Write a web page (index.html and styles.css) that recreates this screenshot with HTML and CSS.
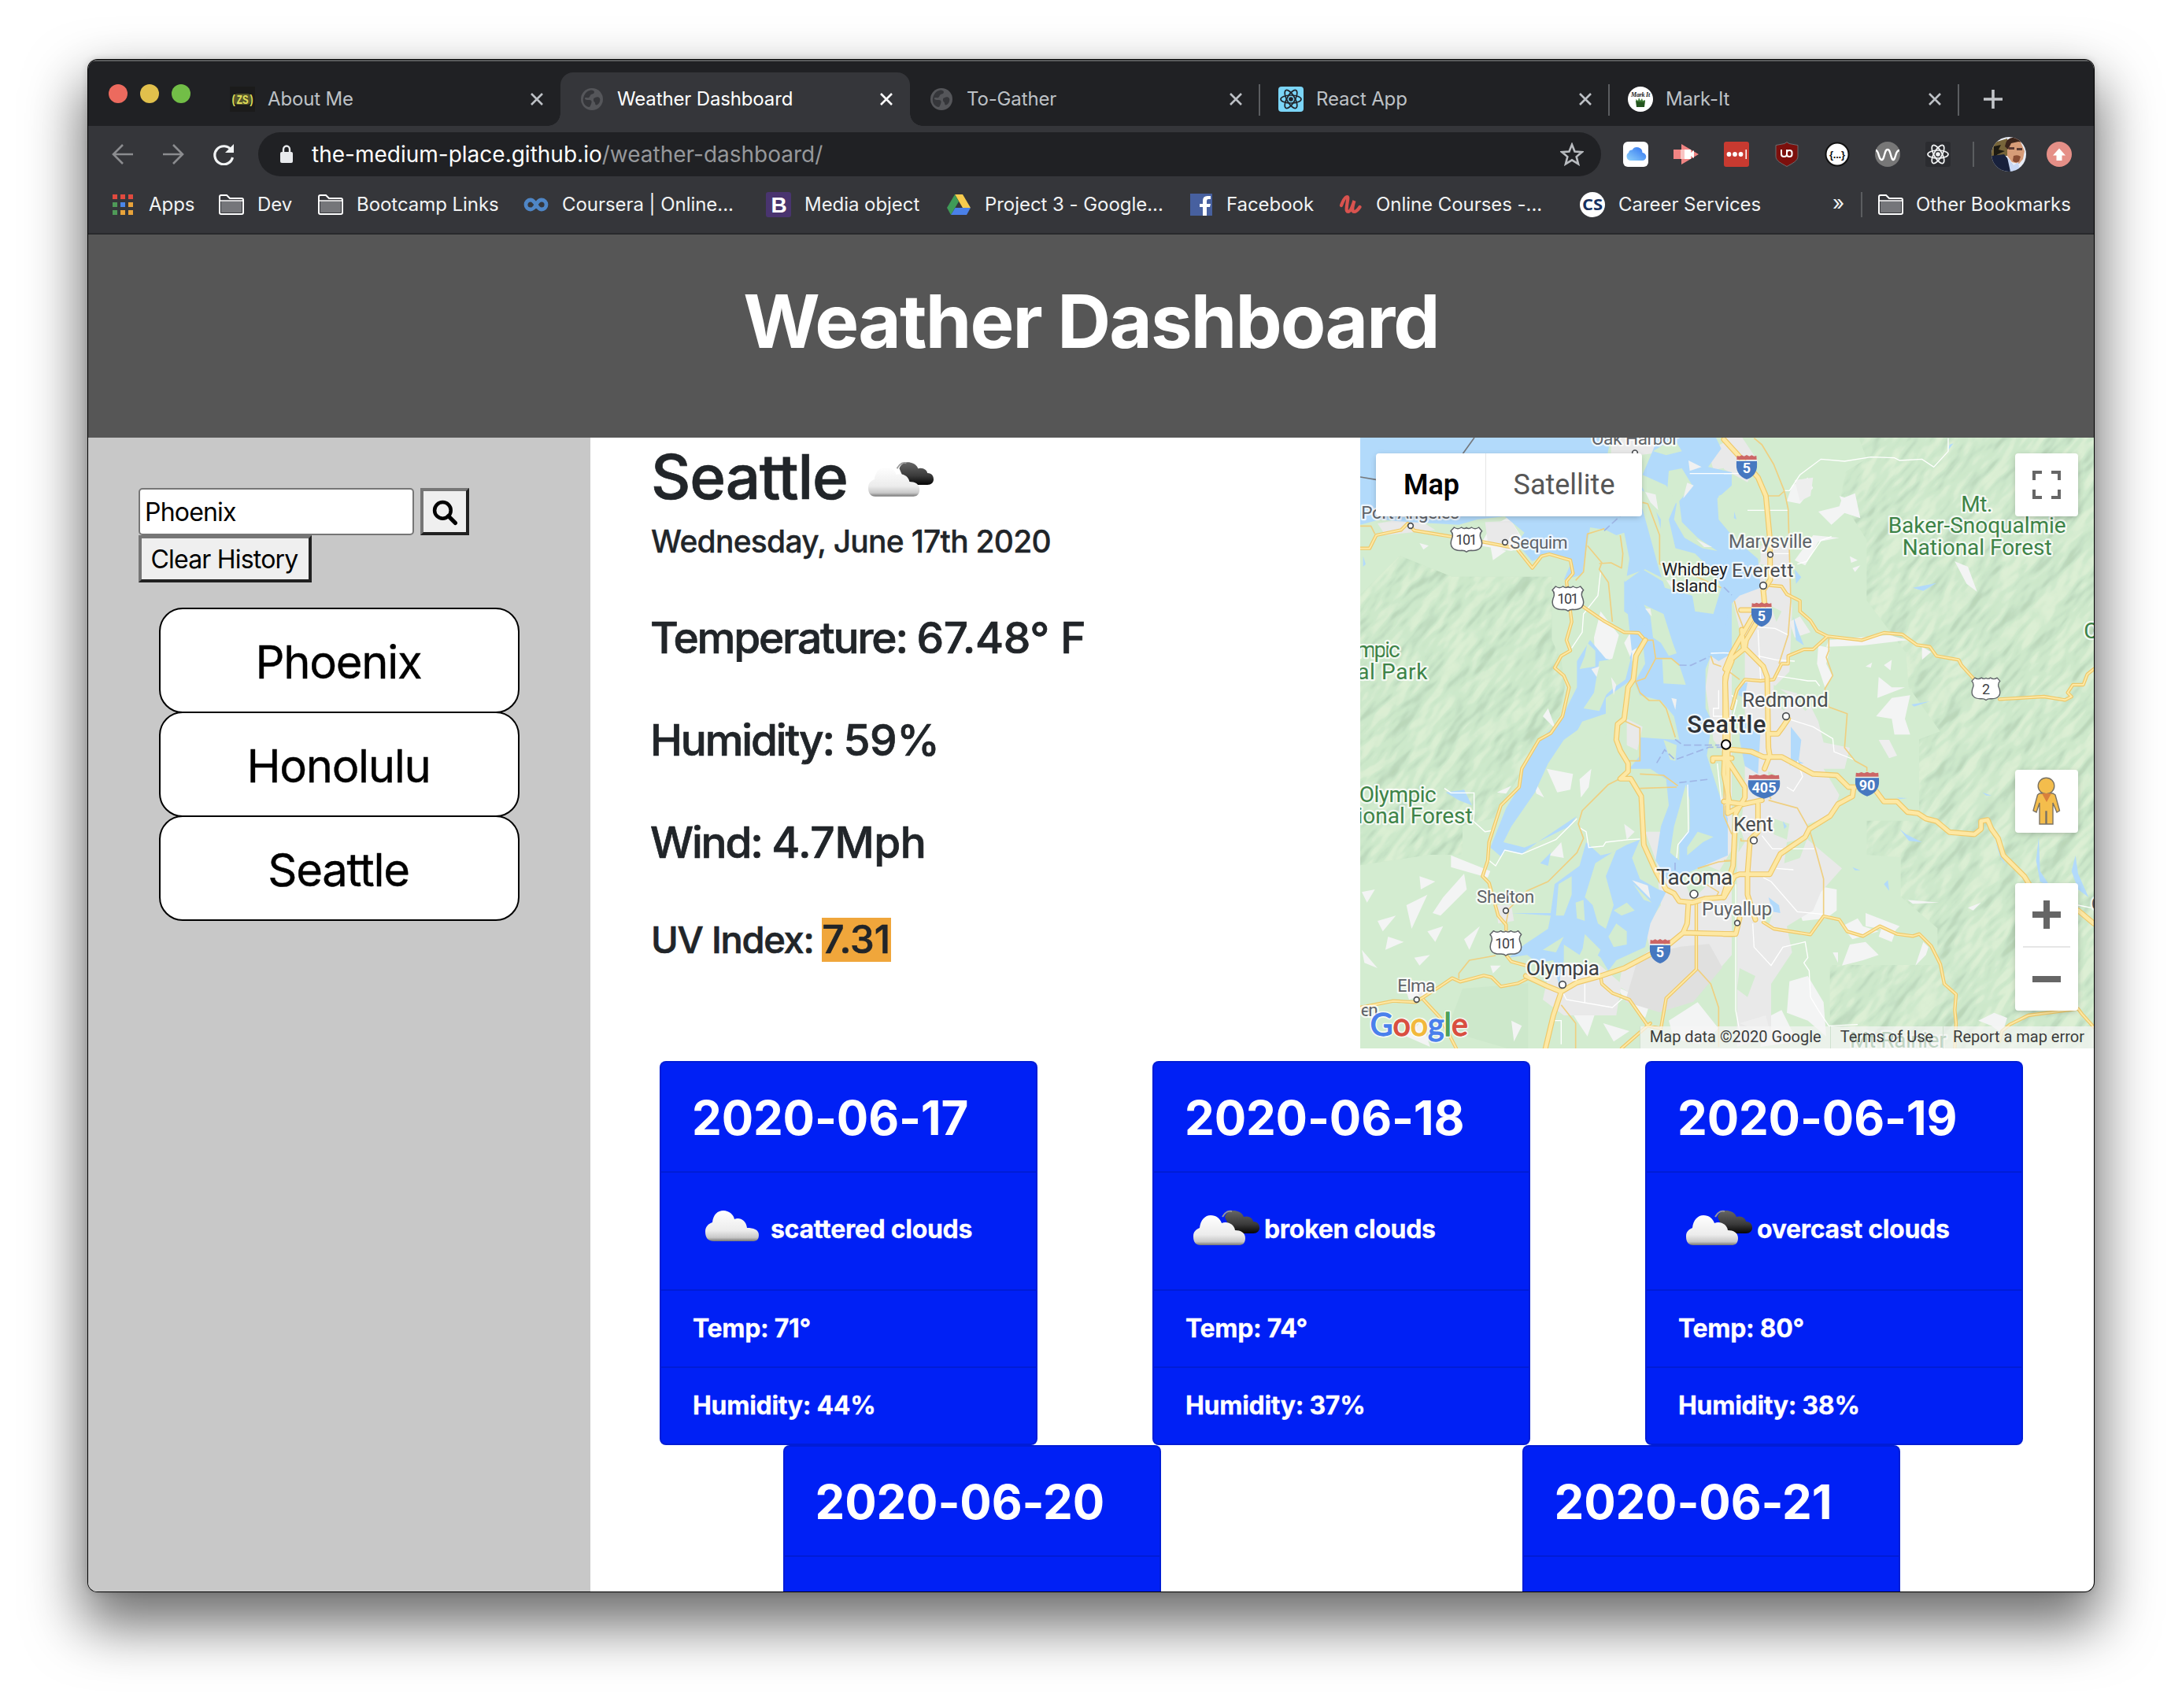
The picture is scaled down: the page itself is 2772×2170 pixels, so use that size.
FILE: index.html
```html
<!DOCTYPE html>
<html lang="en">
<head>
<meta charset="utf-8">
<title>Weather Dashboard</title>
<link rel="stylesheet" href="styles.css">
</head>
<body>
<svg class="defs" width="0" height="0" aria-hidden="true">
  <defs>
    <symbol id="close" viewBox="0 0 20 20"><path d="M3 3l14 14M17 3L3 17" stroke="currentColor" stroke-width="2.6" fill="none"/></symbol>
    <symbol id="globe" viewBox="0 0 28 28"><circle cx="14" cy="14" r="14" fill="#55565a"/><path d="M11 3c3-1 6 0 6 2s-2 2-4 3-1 3-3 4-5-1-5 1 3 2 6 2 3 3 2 5-1 4-3 4C5 23 2 18 3 13 4 8 7 4 11 3zM18 12c2-1 5-1 6 1s0 6-3 8c-2 1-3 0-3-2s-2-1-2-4 1-2 2-3z" fill="#35363a"/></symbol>
    <symbol id="atom" viewBox="-14 -14 28 28"><g fill="none" stroke="currentColor" stroke-width="1.7"><ellipse rx="13" ry="5"/><ellipse rx="13" ry="5" transform="rotate(60)"/><ellipse rx="13" ry="5" transform="rotate(120)"/></g><circle r="2.8" fill="currentColor"/></symbol>
    <symbol id="folder" viewBox="0 0 32 26"><path d="M1 24V3q0-2 2-2h7l4 4h15q2 0 2 2v16q0 2-2 2H3q-2 0-2-2z" fill="#35363a" stroke="#fff" stroke-width="2"/><path d="M3 9H29V23H3z" fill="#75767a"/><path d="M1 8h30" stroke="#fff" stroke-width="1.600"/></symbol>
    <linearGradient id="cloudfill" x1="0" y1="0" x2="0" y2="1"><stop offset="0" stop-color="#fff"/><stop offset=".65" stop-color="#ececec"/><stop offset=".88" stop-color="#c8c8c8"/><stop offset="1" stop-color="#777"/></linearGradient>
    <linearGradient id="darkfill" x1="0" y1="0" x2="0" y2="1"><stop offset="0" stop-color="#666"/><stop offset=".6" stop-color="#3a3a3a"/><stop offset="1" stop-color="#050505"/></linearGradient>
    <symbol id="cloud" viewBox="0 0 70 42"><path d="M12 40C4 40 1 35 1 28S5 18 10 16C11 6 17 1 24 1s13 5 14 11c6-3 15 1 16 11 8 0 15 2 15 9s-4 8-8 8z" fill="url(#cloudfill)"/></symbol>
    <symbol id="clouds" viewBox="0 0 86 46"><path d="M41 9C43 3 48 1 52 1s11 2 13 8c6-2 12 2 12 6 6 0 8 4 8 8s-3 7-8 7H50z" fill="url(#darkfill)"/><path d="M38 9C42 2 47 1 50 2" stroke="#999" stroke-width="2" fill="none"/><path d="M10 45C4 45 1 41 1 34s4-9 8-11C10 13 16 7 23 7s12 4 14 10c8-3 16 2 17 9 7 0 13 3 13 10s-4 9-8 9z" fill="url(#cloudfill)"/></symbol>
    <symbol id="interstate" viewBox="-40 -48 80 96"><path d="M-37-43l9 2 9-4 9 4 10-5 10 5 9-4 9 4 9-2 1 15h-76z" fill="#c66"/><path d="M-38-26h76v4h-76z" fill="#fff"/><path d="M-39-23h78C44 18 25 38 0 47-25 38-44 18-39-23z" fill="#4678c0"/></symbol>
    <symbol id="usroute" viewBox="-63 -51 126 102"><path d="M-47-46q14 10 28 0 10 8 19 1 9 7 19-1 14 10 28 0l12 14q-10 9-6 24C70 30 48 44 18 42q-12 0-18 6-6-6-18-6C-48 44-70 30-54-8q4-15-6-24z" fill="#fff" stroke="#5f6368" stroke-width="4.500" stroke-linejoin="round"/></symbol>
  </defs>
</svg>

<main class="window">
  <header class="tabs">
    <div class="lights"><i class="red"></i><i class="yellow"></i><i class="green"></i></div>
    <div class="tab">
      <svg class="fav" viewBox="0 0 32 32"><rect width="32" height="32" fill="#1b1b1b"/><rect x="5" y="9" width="22" height="14" rx="5" fill="#55552c"/><text x="1" y="22" font-family="Liberation Mono" font-size="17" font-weight="700" fill="#dddb57" textLength="30" lengthAdjust="spacingAndGlyphs">(ZS)</text></svg>
      <span>About Me</span><svg class="x"><use href="#close"/></svg>
    </div>
    <div class="tab active">
      <svg class="fav globe"><use href="#globe"/></svg><span>Weather Dashboard</span><svg class="x"><use href="#close"/></svg>
    </div>
    <div class="tab sep">
      <svg class="fav globe"><use href="#globe"/></svg><span>To-Gather</span><svg class="x"><use href="#close"/></svg>
    </div>
    <div class="tab sep">
      <svg class="fav" viewBox="-16 -16 32 32"><rect x="-16" y="-16" width="32" height="32" rx="4" fill="#7bd5f7"/><g color="#20232a"><use href="#atom" x="-14" y="-14" width="28" height="28"/></g></svg><span>React App</span><svg class="x"><use href="#close"/></svg>
    </div>
    <div class="tab sep">
      <svg class="fav" viewBox="0 0 32 32"><circle cx="16" cy="16" r="16" fill="#fff"/><text x="4" y="13" font-family="Liberation Serif" font-style="italic" font-weight="700" font-size="8" textLength="24" fill="#222">Mark It</text><path d="M10 18h12l-1 8H11z" fill="#25551f"/><path d="M11 19l-1-3 3 2 1-4 2 4 2-3 1 3 3-1-1 3z" fill="#3c7a34"/></svg><span>Mark-It</span><svg class="x"><use href="#close"/></svg>
    </div>
    <svg class="plus" viewBox="0 0 24 24"><path d="M12 0v24M0 12h24" stroke="#c3c6ca" stroke-width="3.600"/></svg>
  </header>

  <nav class="toolbar">
    <svg class="nav dim" viewBox="0 0 28 28"><path d="M27 14H3M14 2L2 14l12 12" fill="none" stroke="#8b8c8f" stroke-width="2.600"/></svg>
    <svg class="nav dim" viewBox="0 0 28 28"><path d="M1 14h24M14 2l12 12-12 12" fill="none" stroke="#8b8c8f" stroke-width="2.600"/></svg>
    <svg class="nav" viewBox="0 0 28 28"><path d="M24 9A11.500 11.500 0 1 0 25.500 18" fill="none" stroke="#f1f3f4" stroke-width="3.200"/><path d="M27 1v11H16z" fill="#f1f3f4"/></svg>
    <div class="omnibox">
      <svg class="lock" viewBox="0 0 18 24"><rect x="1" y="9" width="16" height="14" rx="2" fill="#e8eaed"/><path d="M5 10V6a4 4.500 0 0 1 8 0v4" fill="none" stroke="#e8eaed" stroke-width="2.400"/></svg>
      <span class="url">the-medium-place.github.io<em>/weather-dashboard/</em></span>
      <svg class="star" viewBox="0 0 28 28"><path d="M14 2.500l3.300 8.200 8.700.6-6.700 5.600 2.200 8.600L14 20.800l-7.500 4.700 2.200-8.600L2 11.300l8.700-.6z" fill="none" stroke="#b9bcc0" stroke-width="2.400"/></svg>
    </div>
    <div class="exts">
      <svg viewBox="0 0 32 32"><linearGradient id="icl" x1="0" y1="1" x2="1" y2="0"><stop offset="0" stop-color="#8fd3fb"/><stop offset="1" stop-color="#2d6ff0"/></linearGradient><rect width="32" height="32" rx="6" fill="#fff"/><path d="M9 24a5.500 5.500 0 0 1-2-10 4 4 0 0 1 4.500-3.500 7 7 0 0 1 13 3.500 5 5 0 0 1-.5 10z" fill="url(#icl)"/></svg>
      <svg viewBox="0 0 32 32"><path d="M0 10h10V3l22 13-22 13v-7H0z" fill="#f08483"/><rect x="9" y="10" width="13" height="12" fill="#f9c3c2"/><path d="M14 10h8v4l4-3v10l-4-3v4h-8z" fill="#fff"/></svg>
      <svg viewBox="0 0 32 32"><rect width="32" height="32" rx="3" fill="#c83a30"/><g fill="#fff"><circle cx="6.500" cy="16" r="2.900"/><circle cx="14" cy="16" r="2.900"/><circle cx="21.500" cy="16" r="2.900"/><path d="M27.500 10h1.500v12h-1.500z"/></g></svg>
      <svg viewBox="0 0 32 32"><path d="M16 .5l3 2 11 2v14c0 6-7 9-14 13C9 27.500 2 24.500 2 18.500v-14l11-2z" fill="#7c100d" stroke="#6b6c6f" stroke-width="1"/><path d="M9 10v6q0 3 3.500 3t3.500-3v-6" fill="none" stroke="#fff" stroke-width="2"/><rect x="16" y="11" width="6.500" height="8" rx="3" fill="none" stroke="#fff" stroke-width="2"/></svg>
      <svg viewBox="0 0 32 32"><circle cx="16" cy="16" r="14.500" fill="#fff" stroke="#111" stroke-width="2"/><text x="16" y="20.500" text-anchor="middle" font-family="Liberation Sans" font-weight="700" font-size="13" textLength="20" fill="#111">{...}</text></svg>
      <svg viewBox="0 0 32 32"><circle cx="16" cy="16" r="16" fill="#777"/><path d="M1 11c2 0 3 3 4 7s4 8 6 2 2-10 5-10 3 4 5 10 4 2 5-2 3-7 5-7" fill="none" stroke="#fff" stroke-width="2.400"/></svg>
      <svg viewBox="-16 -16 32 32"><rect x="-16" y="-16" width="32" height="32" rx="3" fill="#2b2c30"/><g color="#f1f3f4" transform="rotate(0)"><use href="#atom" x="-14" y="-14" width="28" height="28"/></g></svg>
    </div>
    <svg class="avatar" viewBox="0 0 44 44"><clipPath id="av"><circle cx="22" cy="22" r="22"/></clipPath><g clip-path="url(#av)"><rect width="44" height="44" fill="#e9edf6"/><path d="M0 8l20-6v22H0z" fill="#77653a"/><path d="M3 12l9-2-3 6 8 2-9 4-5 4z" fill="#1d1a12"/><path d="M20 4q8-6 16 0l6 14-2 10-5 6-9-2-6-8z" fill="#d79c78"/><path d="M17 12Q19-1 31 1l10 6-7-1-9 2-4 8z" fill="#3a241b"/><path d="M21 13h8v3h-7zM32 14h7v3h-7zM28 14h5" fill="#5a3a33"/><path d="M28 24q6-2 9 1l-2 6q-5 3-8-1z" fill="#8a4d34"/><path d="M0 24l16-2 10 12 6 10H0z" fill="#18213c"/><path d="M20 26l8 10 6-4 2 12H24z" fill="#c9d8f4"/></g></svg>
    <svg class="update" viewBox="0 0 32 32"><circle cx="16" cy="16" r="16" fill="#e58f87"/><path d="M16 8.500l8 9h-4.500V24h-7v-6.500H8z" fill="#fff"/></svg>
  </nav>

  <nav class="bookmarks">
    <div class="bm b1"><svg viewBox="0 0 32 32"><g fill="#e04a3f"><path d="M3 3h6v6H3zM13 3h6v6h-6zM23 3h6v6h-6z"/></g><path d="M3 13h6v6H3zM3 23h6v6H3z" fill="#4f9a58"/><path d="M13 13h6v6h-6z" fill="#4a86e8"/><path d="M23 13h6v6h-6zM13 23h6v6h-6zM23 23h6v6h-6z" fill="#e8a33a"/></svg>Apps</div>
    <div class="bm b2"><svg class="f"><use href="#folder"/></svg>Dev</div>
    <div class="bm b3"><svg class="f"><use href="#folder"/></svg>Bootcamp Links</div>
    <div class="bm b4"><svg viewBox="0 0 32 32"><path d="M16 16c-3-5-4.500-6-7-6a6 6 0 0 0 0 12c2.500 0 4.500-1 7-6s4.500-6 7-6a6 6 0 0 1 0 12c-2.500 0-4-1-7-6z" fill="none" stroke="#4f86c6" stroke-width="4.800"/></svg>Coursera | Online...</div>
    <div class="bm b5"><svg viewBox="0 0 32 32"><rect width="32" height="32" rx="3" fill="#49346f"/><text x="16.500" y="26" text-anchor="middle" font-family="Liberation Sans" font-weight="700" font-size="28" fill="#fff">B</text></svg>Media object</div>
    <div class="bm b6"><svg viewBox="0 0 32 32"><path d="M11 3h10l10 17H21z" fill="#f7cb4d"/><path d="M11 3l5 9L6 29l-5-9z" fill="#3f9b57"/><path d="M11.500 20H31l-5 9H6z" fill="#4a80e8"/></svg>Project 3 - Google...</div>
    <div class="bm b7"><svg viewBox="0 0 32 32"><rect x="3" y="2" width="28" height="28" fill="#47609f"/><path d="M19 30V19h-4v-4h4v-4q0-6 6-6h4v4h-3q-2 0-2 3v3h5l-1 4h-4v11z" fill="#fff"/></svg>Facebook</div>
    <div class="bm b8"><svg viewBox="0 0 32 32"><path d="M5 17q4-11 7.500-11c3 0-4 19 1 19 4 0 6-9 8-14-3 9-3 14 0 14q3 0 7-6" fill="none" stroke="#d9534f" stroke-width="4.200" stroke-linecap="round"/></svg>Online Courses -...</div>
    <div class="bm b9"><svg viewBox="0 0 32 32"><circle cx="16" cy="16" r="16" fill="#fff"/><text x="16" y="22.500" text-anchor="middle" font-family="Open Sans" font-weight="700" font-size="19" textLength="26" lengthAdjust="spacingAndGlyphs" fill="#16305f">CS</text></svg>Career Services</div>
    <div class="more">»</div>
    <div class="bm other"><svg class="f"><use href="#folder"/></svg>Other Bookmarks</div>
  </nav>

  <section class="hero"><h1>Weather Dashboard</h1></section>

  <div class="content">
    <aside class="side">
      <div class="search"><div class="field">Phoenix</div>
        <button class="btn go"><svg viewBox="0 0 32 32"><circle cx="13" cy="13" r="10" fill="none" stroke="#000" stroke-width="4.400"/><path d="M20 20l8.500 8.500" stroke="#000" stroke-width="5" stroke-linecap="round"/></svg></button></div>
      <button class="btn clear">Clear History</button>
      <ul class="history"><li>Phoenix</li><li>Honolulu</li><li>Seattle</li></ul>
    </aside>

    <div class="main">
      <div class="current">
        <section class="today">
          <h2>Seattle <svg><use href="#clouds"/></svg></h2>
          <p class="date">Wednesday, June 17th 2020</p>
          <p class="stat">Temperature: <span>67.48° F</span></p>
          <p class="stat">Humidity: <span>59%</span></p>
          <p class="stat">Wind: <span>4.7Mph</span></p>
          <p class="uv">UV Index: <mark>7.31</mark></p>
        </section>

        <section class="map">
          <svg viewBox="0 0 2796 2328" font-family="Roboto, sans-serif">
            <defs>
              <filter id="relief" x="0" y="0" width="100%" height="100%" color-interpolation-filters="sRGB">
                <feTurbulence type="fractalNoise" baseFrequency=".0045 .0105" numOctaves="3" seed="4"/>
                <feDiffuseLighting surfaceScale="44" lighting-color="#fff"><feDistantLight azimuth="250" elevation="50"/></feDiffuseLighting>
                <feComponentTransfer><feFuncR type="table" tableValues=".71 .73 .77 .80 .81 .88"/><feFuncG type="table" tableValues=".82 .84 .88 .91 .915 .945"/><feFuncB type="table" tableValues=".70 .73 .77 .79 .80 .84"/></feComponentTransfer>
              </filter>
              <clipPath id="hills">
                <path d="M0 600L150 450 350 530 730 530V770L766 850 780 950 760 1060 680 1150 610 1280 530 1420 510 1450 390 1480V1590H260L0 1630z"/>
                <path d="M1900 0H2796V2328H2250L1790 2240V2010H2200V1870L2060 1750V1600L1930 1590V1460H2130V1150L2210 1120 2090 950 2080 820 1930 620V390L1830 230 1850 130 1930 80z"/>
              </clipPath>

              <g id="major">
                <g transform="translate(-24 -18)"><path d="M1110 790L1075 850 1065 940 1045 970 1030 1090 1005 1110 1000 1170 1015 1210 1045 1260V1290L1015 1318H1055L1095 1385 1105 1570 1150 1670 1190 1740 1220 1755 1240 1785 1290 1790 1340 1775 1410 1770 1440 1720M1440 870L1415 930V1180L1410 1300 1430 1400M1368 1250V1240H1440M1275 1790L1270 1870 1255 1905 1200 1950 1030 2040 940 2070 850 2095 790 2130 760 2220 730 2346M655 2070L740 2110 790 2130M1255 1905L1440 1910"/></g>
                <g transform="translate(1386 -18)"><path d="M0 25L50 80 130 170 160 240 175 400 177 560 150 600 155 650 120 730 85 790 80 820 150 890 165 930 170 1200 175 1230 155 1280M80 820L20 870 5 950 10 1080 15 1100 15 1320M65 675H140M68 750L75 820M110 700L30 840 5 900M15 1205L105 1215 150 1235H220L340 1300 430 1305 475 1350H500M580 1365L610 1405H660L700 1445 740 1450 770 1470 810 1480 860 1522 955 1530 980 1510V1480L1005 1475 1020 1510 1045 1545 1065 1610 1145 1690 1200 1780M1350 1820L1410 1870M10 1210L15 1250 80 1350V1390L45 1450 35 1650 0 1760M0 1405L75 1415 145 1400M130 1415V1520L100 1550 90 1680V1760L120 1855M0 1770L40 1690 60 1682H175L215 1605 310 1540 325 1510 405 1460 435 1415 490 1385 495 1350M0 1910H45L60 1850M170 1147H205L225 1120 245 1090M15 1260V1450L50 1430"/></g>
              </g>
              <g id="minor">
                <g transform="translate(-24 -18)"><path d="M24 440H60L85 390 180 370 205 345 230 372 370 395M490 415L620 440 680 515 715 470 745 462 825 485 835 535 810 565 830 720 810 790 825 830 790 850 765 895 800 925 820 970 795 1080 750 1145 705 1170 640 1280 630 1350 560 1420 515 1560 510 1630 490 1690 515 1715 550 1840 580 1875V1990L600 2015 655 2030M870 660L950 715 1030 760 1085 762 1110 790M24 2190L150 2165 235 2170 320 2115 375 2078 405 2092 495 2068 525 2075 560 2110 625 2098 680 2070M265 2160L330 2230 390 2346M940 2070L945 2100 985 2135 1050 2160 1120 2260 1170 2270 1190 2155 1305 2045V1790M1130 2250L1020 2346"/></g>
                <g transform="translate(1386 -18)"><path d="M165 580L220 585 240 615 290 640V680L330 715 355 755 395 775 525 790 610 762 680 768 735 808 785 815 810 850 895 865 905 885 955 940M1050 1015L1220 1005 1300 1018 1325 1005 1310 990 1330 960H1370L1385 920 1410 900M395 775L340 825H305L245 850 245 880H220L190 940 140 945 80 940 50 980 30 1050M150 1865L190 1890 330 1912 380 1842 440 1855 470 1900 530 1918 595 1880 660 1910 720 1918 745 1910 790 1955 825 2025 840 2100 885 2140 880 2200 885 2250 880 2346M1050 2320L1060 2280 1090 2255 1160 2220 1350 2195 1365 2215 1410 2265"/></g>
              </g>
            </defs>

            <rect width="2796" height="2328" fill="#d3ecd0"/>
            <g fill="#cde8cb"><path d="M0 600L150 450 350 530 730 530V770L766 850 780 950 760 1060 680 1150 610 1280 530 1420 390 1480V1590H260L0 1630z"/><path d="M390 2100L640 2080V2328H560L330 2260z"/></g>
            <g clip-path="url(#hills)"><rect x="-900" y="-900" width="4600" height="4200" filter="url(#relief)" transform="rotate(-48 1398 1164)" opacity=".8"/></g>

            <!-- open ground -->
            <g fill="#f3f4f4">
              <g transform="translate(-24 -18)"><path d="M250 420l35 10-20 15zM520 430l60 20-50 35zM940 680l70 90-25 90-65 20-5-100zM1030 800l30-50 30 30-30 90zM720 1080l20-30 30 80zM735 1280l100 20-10 60-50 10zM860 1320l45-40-10 70-30 40zM685 1320l40 70-30-15zM545 1370l55-25-20 30zM790 1560l10 60-55-10zM370 1610l150 60-10 25-140-40zM250 1690l60 20-55 30zM340 1770l80-90 10 60-100 100-30-10zM200 1800l80-40-60 130zM90 1860l70-20-50 60zM130 1920l60 20-70 30zM30 1970l60 70-50-20zM280 1900l60-20-30 60zM420 1930l60-50-40 90zM230 2000l60-10-40 40zM30 1750l50-10-30 50zM520 2030l40 0-30 30zM200 2130l60-20 20 30-70 20zM800 2020l60 0 10 60-60-10zM1000 2110l130 60-20 60-90-90zM820 2190l100 20-30 90-40-60zM950 2250l100 30-60 40zM1200 2240l110-70 80 100-70 60-100-20zM600 2240l40 20-30 60zM1080 720l30 10-20 25zM590 320l70 110-60 20-120-20 40-70zM200 2300l60-60 30 100z"/></g>
              <g transform="translate(1386 -18)"><path d="M360 300l80-20 10-30 50-20 20 95-60-20-50 45zM260 200l60-30 20 40-50 60-50-10zM440 240l30 10-15 25zM480 470l30 15-25 10zM490 515l30-10-20 25zM340 390l100 10-80 15-50 90-40-20zM880 490l50 20 35 95-40-30zM400 790l230-20 70 20-170 20-140 5zM360 810l45 10-15 60 25 50-30 40-30-90zM590 930l50 40 50 0-105 40zM610 885l30-20-5 40zM540 890l25-15-5 20zM755 815l35 20-35 30zM640 1010l70-10-20 90 20 60-60 0 -10-60-60-10zM320 1720l110 20 0 80-40 30-90 10-30-80zM540 1830l130 50-20 20-110-20zM450 1880l60-30 20 30 60 20-100 30zM600 1890l60-10-20 60-50-20zM480 1950l60-10 50 50-60 20-80 20zM415 1980l20 0 0 40zM250 2090l70-20 60 100 10 130-70-60-80-30zM140 2240l80-40 60 120-140 20zM970 2240l60-30 50 20-20 60-40-30zM930 1810l50-20-30 30zM700 1780l120 10-100 5zM760 1940l20 20-10 30-40 40z"/></g>
            </g>
            <!-- urban areas -->
            <g fill="#e9e9e9">
              <g transform="translate(-24 -18)"><path d="M90 345l140-25 80 50-100 10-90 10zM500 340l100-5 50 90-70 20-70-30zM980 18h220l-60 60-160 20zM1270 110l60 30-60 10zM1350 70l90-50v110l-70 10zM1370 850l70-60v800l-60 100-90 90-40-90-90-30-20-60-30-80 180 0 10-90 100-30 30-90 0-60-60-80-30-200 20-130zM1190 1580l-30 140 10 80-60 90 20 80-110 80-10 60 100 60 110 10 150-110 70-80v-300z"/><path d="M830 2030l110 0 80 70-20 120-200 0-80-60 20-90zM230 2100l80-10-60 60zM300 200l60-60zM960 900l40 30-20 60-30-40zM1040 1090l60 30-20 90-40-20zM540 1800l60 0 10 60-60 10z"/></g>
              <g transform="translate(1386 -18)"><path d="M30 620l110-130 0-60 110-10 0 100 10 150-10 240-60 60 120 30 50 100 20 80 100 20-20 80-80 0 60 100-30 80-90 30 0 60 130 110-80 90-30 70-100 60 20 100-80 120 0 200-130 40V1600l30-220V840z"/><path d="M0 18h70l60 90-40 80-90-50z"/><path d="M270 180l70-10-10 70-40 20zM290 700l40 60-60 20-20-60zM590 1170l40 0 30 60-30 10zM60 2250l100-30 20 80z" fill="#eee"/></g>
              <path d="M1060 1980l160-40 110-10 50 90-110 130-130 40-130-40z" fill="#e0e0df"/>
            </g>
            <!-- parks inside the city -->
            <g fill="#d3ecd0" transform="translate(1386 -18)"><path d="M190 960l60 40-20 60-40-30zM300 960l60 60-50 40-40-50zM190 1470l60 20-10 60-50-20zM240 1560l80-20-30 80-60 20zM170 1290l40 20-20 60-30-30zM180 660l40 20-20 40zM60 1500l20 60-25 40zM260 1220l30 30-40 20zM150 1790l40 30-20 60-25-30zM140 500l40 10-20 60zM60 2040l60 30-30 80-40-30z"/></g>

            <!-- Puget Sound, Hood Canal and lakes -->
            <g fill="#b2dafb">
              <g transform="translate(-24 -18)">
                <path d="M24 18H980L960 110 1090 190 1110 230 1170 330 1165 480 1190 560 1110 520 1040 545 1050 480 1030 380 1000 390 960 370 900 360 890 420 870 540 800 560 830 490 740 455 680 490 620 420 650 380 575 318 470 330 400 350 210 340 100 330 24 350z"/>
                <path d="M1160 18H1380L1400 60 1350 130 1440 150V220L1390 240 1400 330 1440 380V840L1390 870 1360 850 1340 900V1050L1365 1100 1345 1230 1390 1370 1425 1470V1610L1310 1660 1200 1710 1150 1630 1170 1500 1200 1420 1190 1320 1130 1280 1050 1280 1090 1230V1160L1230 1170 1190 1060 1090 1000 1070 950 1110 880 1100 790 1110 740 1030 680V570L1100 520 1200 580 1290 620 1400 600 1290 500 1230 460 1200 330 1230 260 1190 200 1100 160z"/>
                <path d="M1030 560L1110 740 1110 800 1060 830 1030 930 960 1000 1000 870 960 860 900 790 850 870 850 970 790 1090 720 1160 640 1270 630 1350 580 1430 520 1580 560 1615 580 1590 640 1605 700 1560 820 1500 850 1460 700 1560 650 1580 570 1560 600 1500 690 1370 740 1260 800 1170 870 1120 960 1080 960 1010 1060 940V840z"/>
                <path d="M885 1560L940 1610 985 1600 1040 1570 1090 1550 1060 1620 1090 1700 1160 1740 1190 1750 1130 1870 1110 1960 1000 2010 970 2050 940 2000 880 1950 860 1990 800 1950 800 2010 780 2100 760 2010 700 2020 660 1990 590 2000 650 1950 740 1890 750 1840 600 1830 750 1830 765 1720 860 1650z"/>
                <path d="M350 1370l70-10 30 60-50-20zM35 470l10 30-10 10zM710 1640l40-40-10 50zM755 335l30 10-25 5zM780 2050l10 60-8 20z"/>
              </g>
              <g transform="translate(1386 -18)">
                <path d="M0 390L60 420 130 480 140 590 60 620 20 660 0 770zM40 300l8 30-10-5zM270 520l25 30-20 25zM265 700l20 60 20 50-30-20zM860 45l15-5-20 25zM720 590l90-18-50 30zM715 1035l70-12-60 20zM60 960l30-10-10 60-25-10zM60 1090l80 40-10 170-50-30-20-100zM255 1120l40 50-10 80 20 10-50 0zM670 1510l25 20 60 30-50-5zM1200 1540l5 130 40 60-40-20-15-80zM1340 1610l10 70 40 90-40-30-25-70zM490 1655l30 12-20 0zM610 1720l15-15 5 40zM170 1770l40 30 5 30-30-5zM225 1480l15 20-10 10zM660 1390l40 2-30 4zM985 1370l35 12-20 0zM1035 1560l40 90-20-30zM0 1520l15 10v70l-15 10z"/>
              </g>
            </g>
            <!-- islands -->
            <g fill="#d3ecd0" transform="translate(-24 -18)">
              <path d="M1000 170L1100 220 1140 250 1165 350 1190 430 1300 460 1380 540 1400 590 1370 690 1300 680 1290 620 1185 590 1160 510 1130 400 1100 290z"/>
              <path d="M1200 145L1250 135 1290 200 1240 260 1250 340 1310 400 1385 450 1330 440 1260 400 1220 330 1230 270 1195 210zM1140 70l80-50 30 50-60 15zM1385 250l55-50v190l-50-60z"/>
              <path d="M1105 655L1180 690 1215 800 1230 840 1200 850 1170 800 1140 780 1130 700zM1175 860L1210 858 1240 885 1265 960 1180 955zM890 800l30 30 0 60-60 10 20-50zM1000 860l55 0-20 80-70 50-30 70-60-10 40-60 20-120zM985 1000l40-30 20 120-30 30-20-70zM1090 1000l80 20 50 60 20 90-70-20-60-90zM870 1100l90-30 20 60-60 70-120 30z"/>
              <path d="M1265 1340L1280 1400 1280 1510 1240 1560 1240 1630 1205 1600 1220 1500 1240 1430zM1310 1520l60 20-40 20-60 50 0-30zM1180 1170l50 20-5 60-20-5z"/>
              <path d="M920 1640L1000 1590 960 1690 990 1800 960 1890 930 1870 910 1800 880 1770zM780 1720l50-30 0 70-30 80-30 0zM845 1790l30-10 5 80-30-10zM1000 1870l40 30 0 50-50 10-20-40zM990 1820l50-30 30 30-50 20zM720 1970l80-50-30 60zM880 1910l60 60-30 60-40-50zM1065 1720l70 70-30-10z"/>
            </g>
            <g fill="#f0f1f1" transform="translate(-24 -18)"><path d="M1110 225l40 10 10 60-30-30zM1270 190l25 10-40 50zM1275 105l50 25-45 15zM1305 405l60 30-30 0zM1110 670l20 0 5 30zM905 900l30-10-10 40zM980 930l20 30-10 40zM1040 1550l-10-60 40 30zM1060 1705l60 20 10 50zM1190 560l60 10-40 20zM1210 1010l20 5-5 40z"/></g>
            <g fill="none" stroke="#9fb6e6" stroke-width="5" stroke-dasharray="28 12"><path d="M930 355L1000 290M1216 867L1260 868 1330 835M1386 570L1416 600M1130 1240L1160 1190 1200 1228 1330 1180 1390 1180M1216 1315L1330 1302M1200 1620v40M1200 1150l30 22h140"/></g>
            <path d="M435 0L385 70M0 150L60 160" stroke="#75787c" stroke-width="5"/>

            <!-- local and county roads -->
            <g fill="none" stroke="#fff" stroke-width="4">
              <path transform="translate(-24 -18)" d="M940 530L930 620 875 690 870 760 830 820M1280 155H1440M1360 840L1410 838 1440 840M345 1355L370 1372H458V1450L455 1480 500 1520 530 1515M515 1630L540 1650 575 1590 640 1605 770 1550 850 1470M860 1505L885 1520 895 1580 950 1575 960 1560 1050 1550 1090 1548M1272 1340L1275 1520 1235 1570 1230 1620M795 2130L810 2160 985 2190 1030 2150M880 2100V2170M750 2240H790V2330M1390 980V1050L1370 1050V1080H1440M1385 1260L1400 1400"/>
              <path transform="translate(1386 -18)" d="M230 220H250L290 160 370 100 460 108 560 92 650 95 670 105 755 100 800 130 855 70 855 20M90 295H245M0 155H60M180 460H250M280 500L315 490 370 410 410 395M130 740L195 745 245 770M130 850L200 865 270 870M195 925L320 945 350 945 365 965M245 1090L340 1120 415 1165 420 1215 495 1245M30 1000L50 1020 30 1100M130 750L140 940M240 1350L265 1365 300 1310 280 1250M145 1535L185 1585H345M150 1695L180 1710 280 1825 380 1835M110 1870L115 1960 180 2030 225 1960 310 1940 320 2000 305 2020 325 2050 330 2150 360 2200 400 2260 510 2255M45 1720V2200L60 2280M1350 1800L1400 1810M200 1660L265 1665"/>
            </g>
            <g fill="none" stroke="#efcf80" stroke-width="5" stroke-linejoin="round">
              <path transform="translate(-24 -18)" d="M24 355H65L80 385M890 430L945 495 935 520 970 570 985 720M955 365L890 385 875 530 845 562M935 498L980 495 1020 515 1025 460 1015 390M1100 265L1120 270 1165 390V500L1300 545 1400 590M1110 790H1140L1150 860 1110 935 1065 950M1150 860H1210L1240 885M1075 950L1090 990 1125 1020H1165L1190 1050 1225 1160M1025 1095L1090 1125V1250H1050M1090 1355L1230 1350M1090 1300L1180 1305 1235 1345M1010 1320L970 1340 870 1440 855 1490 875 1545 850 1600 740 1710 660 1745 590 1815 580 1870M790 2180L845 2250V2346M1310 2045L1360 2100 1390 2190V2340M400 2080V2060L440 2010 540 1992M1310 1660L1390 1635 1440 1630M1310 1700L1390 1750 1380 1770M1360 850L1370 880 1400 890M1410 1170V1460L1440 1530"/>
              <path transform="translate(1386 -18)" d="M115 20L145 45 190 120 230 220 245 290 255 640 245 770 210 880M165 240H210L230 222M400 775V830L390 855 415 925 385 975 400 1045 470 1070 460 1200 500 1250 545 1275V1290M170 1400L280 1430 325 1510 350 1590 380 1700V1835M40 640L50 680 75 745M0 1630H25M65 1545V1555H100M20 910L60 940M165 1370L180 1395"/>
            </g>
            <g fill="none" stroke-linejoin="round" stroke-linecap="round">
              <use href="#minor" stroke="#efc868" stroke-width="13"/><use href="#minor" stroke="#fde8a4" stroke-width="6"/>
              <use href="#major" stroke="#efc868" stroke-width="21"/><use href="#major" stroke="#fde8a4" stroke-width="14"/>
            </g>

            <!-- route shields -->
            <g text-anchor="middle" font-size="54" fill="#3c4043">
              <g transform="translate(405 388)"><use href="#usroute" x="-63" y="-51" width="126" height="102"/><text y="20" textLength="82">101</text></g>
              <g transform="translate(792 613)"><use href="#usroute" x="-63" y="-51" width="126" height="102"/><text y="20" textLength="82">101</text></g>
              <g transform="translate(555 1926)"><use href="#usroute" x="-63" y="-51" width="126" height="102"/><text y="20" textLength="82">101</text></g>
              <g transform="translate(2385 957)"><use href="#usroute" x="-57" y="-51" width="114" height="102"/><text y="20">2</text></g>
            </g>
            <g text-anchor="middle" font-size="54" font-weight="700" fill="#fff">
              <g transform="translate(1473 112)"><use href="#interstate" x="-40" y="-48" width="80" height="96"/><text y="24">5</text></g>
              <g transform="translate(1530 674)"><use href="#interstate" x="-40" y="-48" width="80" height="96"/><text y="24">5</text></g>
              <g transform="translate(1143 1957)"><use href="#interstate" x="-40" y="-48" width="80" height="96"/><text y="24">5</text></g>
              <g transform="translate(1539 1329)"><g transform="scale(1.540 1)"><use href="#interstate" x="-40" y="-48" width="80" height="96"/></g><text y="24">405</text></g>
              <g transform="translate(1932 1320)"><g transform="scale(1.150 1)"><use href="#interstate" x="-40" y="-48" width="80" height="96"/></g><text y="24">90</text></g>
            </g>

            <!-- place names -->
            <g class="halo" fill="#5f6368" font-size="68">
              <text x="882" y="28" textLength="330">Oak Harbor</text>
              <text x="4" y="308" textLength="374">Port Angeles</text>
              <text x="571" y="422" textLength="220">Sequim</text>
              <text x="1404" y="419" font-size="72" textLength="318">Marysville</text>
              <text x="1456" y="1027" font-size="77" textLength="328" fill="#4a4d51">Redmond</text>
              <text x="444" y="1774" textLength="220">Shelton</text>
              <text x="142" y="2112" textLength="144">Elma</text>
              <text x="2" y="2206" textLength="66">en</text>
              <text x="1302" y="1822" font-size="72" textLength="268">Puyallup</text>
              <text x="1422" y="1500" font-size="77" textLength="152" fill="#4a4d51">Kent</text>
              <text x="1416" y="530" font-size="74" textLength="236" fill="#4a4d51">Everett</text>
              <text x="632" y="2048" font-size="80" textLength="280" fill="#3c4043">Olympia</text>
              <text x="1128" y="1704" font-size="84" textLength="292" fill="#3c4043">Tacoma</text>
              <text x="1246" y="1126" font-size="92" font-weight="500" textLength="300" fill="#2f3236">Seattle</text>
              <text x="2786" y="1800">C</text>
              <g fill="#202124" font-size="68"><text x="1150" y="524" textLength="250">Whidbey</text><text x="1186" y="589" textLength="176">Island</text></g>
              <g fill="#3d8347" font-size="84">
                <text x="-114" y="838" textLength="266">Olympic</text><text x="-270" y="922" textLength="526">National Park</text>
                <text x="-4" y="1388" textLength="294">Olympic</text><text x="-144" y="1471" textLength="572">National Forest</text>
                <text x="2290" y="281" textLength="120">Mt.</text><text x="2012" y="364" textLength="678">Baker-Snoqualmie</text><text x="2066" y="448" textLength="570">National Forest</text>
                <text x="2758" y="765">C</text><text x="1866" y="2326" textLength="368">Mt Rainier</text>
              </g>
            </g>
            <g fill="#fff" stroke="#4a4d51" stroke-width="5"><circle cx="1047" cy="58" r="10"/><circle cx="192" cy="336" r="10"/><circle cx="552" cy="399" r="10"/><circle cx="1563" cy="446" r="10"/><circle cx="1536" cy="564" r="13"/><circle cx="1623" cy="1062" r="13"/><circle cx="1500" cy="1535" r="13"/><circle cx="1437" cy="1850" r="10"/><circle cx="1272" cy="1740" r="15"/><circle cx="771" cy="2085" r="13"/><circle cx="555" cy="1803" r="10"/><circle cx="215" cy="2142" r="10"/><circle cx="1394" cy="1170" r="17" stroke="#000" stroke-width="6"/></g>

            <text class="halo" x="38" y="2280" font-family="Lato, sans-serif" font-size="122" font-weight="400" textLength="372" lengthAdjust="spacingAndGlyphs"><tspan class="gb">G</tspan><tspan class="gr">o</tspan><tspan class="gy">o</tspan><tspan class="gb">g</tspan><tspan class="gg">l</tspan><tspan class="gr">e</tspan></text>
            <text x="38" y="2280" font-family="Lato, sans-serif" font-size="122" font-weight="400" stroke-width="4" textLength="372" lengthAdjust="spacingAndGlyphs" aria-hidden="true" class="logo"><tspan class="gb">G</tspan><tspan class="gr">o</tspan><tspan class="gy">o</tspan><tspan class="gb">g</tspan><tspan class="gg">l</tspan><tspan class="gr">e</tspan></text>
          </svg>
          <div class="types"><b>Map</b><span>Satellite</span></div>
          <div class="ctl full"><svg viewBox="0 0 36 36"><path d="M2 12V2h10M24 2h10v10M34 24v10H24M12 34H2V24" fill="none" stroke="#666" stroke-width="4"/></svg></div>
          <div class="ctl peg"><svg viewBox="0 0 36 62"><g fill="#f4bd4c" stroke="#7a7264" stroke-width="1.400"><path d="M9 21h17l3 2 5.500 20-3.500 2-5-12v27h-8V44h-1v16H9V33L5 45l-4-2L6.500 23z"/><circle cx="17.500" cy="11.500" r="10.300"/></g><path d="M12 21h12l-6 11z" fill="#d8803c"/></svg></div>
          <div class="ctl zoom"><svg viewBox="0 0 36 36"><path d="M18 0v36M0 18h36" stroke="#666" stroke-width="8"/></svg><hr><svg viewBox="0 0 36 36"><path d="M0 18h36" stroke="#666" stroke-width="8"/></svg></div>
          <div class="legal"><span class="l1">Map data ©2020 Google</span><span class="l2">Terms of Use</span><span class="l3">Report a map error</span></div>
        </section>
      </div>

      <section class="forecast">
        <article class="card"><h3>2020-06-17</h3><p class="sky"><svg class="single"><use href="#cloud"/></svg>scattered clouds</p><p>Temp: 71°</p><p>Humidity: 44%</p></article>
        <article class="card"><h3>2020-06-18</h3><p class="sky"><svg><use href="#clouds"/></svg>broken clouds</p><p>Temp: 74°</p><p>Humidity: 37%</p></article>
        <article class="card"><h3>2020-06-19</h3><p class="sky"><svg><use href="#clouds"/></svg>overcast clouds</p><p>Temp: 80°</p><p>Humidity: 38%</p></article>
        <article class="card"><h3>2020-06-20</h3><p class="sky"></p></article>
        <article class="card"><h3>2020-06-21</h3><p class="sky"></p></article>
      </section>
    </div>
  </div>
</main>
</body>
</html>
```

FILE: styles.css
```css
* { box-sizing: border-box; }
body {
  margin: 0;
  width: 2772px;
  height: 2170px;
  padding: 76px 112px 148px;
  overflow: hidden;
  background: #fff;
  font-family: "Inter", sans-serif;
}
h1, h2, h3, p, ul { margin: 0; padding: 0; }
svg { display: block; flex: none; }
.defs { position: absolute; }

.window {
  display: flex;
  flex-direction: column;
  width: 2548px;
  height: 1946px;
  overflow: hidden;
  border-radius: 12px;
  background: #fff;
  box-shadow: 0 0 0 1px #000, 0 0 10px rgba(0, 0, 0, .2), 0 36px 70px 8px rgba(0, 0, 0, .56);
}

/* tab strip */
.tabs {
  display: flex;
  align-items: flex-end;
  height: 84px;
  background: #202124;
  box-shadow: inset 0 2px 0 #595b5c;
}
.lights { display: flex; gap: 16px; width: 156px; padding-left: 26px; align-self: flex-start; padding-top: 31px; }
.lights i { width: 24px; height: 24px; border-radius: 50%; }
.red { background: #ec6a5e; }
.yellow { background: #e1c04c; }
.green { background: #72be47; }
.tab {
  position: relative;
  display: flex;
  align-items: center;
  width: 444px;
  height: 68px;
  padding-left: 24px;
  color: #bdc1c6;
  font-size: 24px;
  letter-spacing: -.15px;
}
.tab span { margin-left: 16px; padding-bottom: 1px; }
.fav { width: 32px; height: 32px; }
.fav.globe { width: 28px; height: 28px; margin: 0 2px; }
.x { width: 20px; height: 20px; margin-left: auto; margin-right: 20px; }
.active { background: #35363a; color: #fff; border-radius: 16px 16px 0 0; }
.active::before, .active::after {
  content: "";
  position: absolute;
  bottom: 0;
  width: 16px;
  height: 16px;
}
.active::before { left: -16px; background: radial-gradient(circle at 0 0, #202124 15.500px, #35363a 16px); }
.active::after { right: -16px; background: radial-gradient(circle at 100% 0, #202124 15.500px, #35363a 16px); }
.sep::after { content: ""; position: absolute; right: -1px; top: 15px; width: 2px; height: 40px; background: #5b5d60; }
.plus { width: 24px; height: 24px; margin: 0 0 22px 32px; }

/* toolbar */
.toolbar { display: flex; align-items: center; height: 72px; padding-left: 30px; background: #35363a; }
.nav { width: 28px; height: 28px; margin-right: 36px; }
.omnibox {
  display: flex;
  align-items: center;
  width: 1706px;
  height: 56px;
  margin-left: -6px;
  padding: 0 22px 0 27px;
  border-radius: 28px;
  background: #202124;
}
.lock { width: 18px; height: 26px; }
.url { margin-left: 23px; color: #fff; font-size: 28px; }
.url em { font-style: normal; color: #96989b; }
.star { width: 30px; height: 30px; margin-left: auto; }
.exts { display: flex; gap: 32px; margin-left: 28px; padding-right: 28px; border-right: 2px solid #5b5d60; }
.exts svg, .update { width: 32px; height: 32px; }
.avatar { width: 44px; height: 44px; margin-left: 22px; }
.update { margin-left: 26px; }

/* bookmarks */
.bookmarks {
  display: flex;
  align-items: center;
  height: 66px;
  padding: 0 0 9px 28px;
  border-bottom: 2px solid #28292c;
  background: #35363a;
  color: #f1f3f4;
  font-size: 24px;
  letter-spacing: -.05px;
  white-space: nowrap;
}
.bm { display: flex; align-items: center; gap: 17px; }
.bm svg { width: 32px; height: 32px; }
.bm .f { height: 26px; }
.b1 { width: 138px; }
.b2 { width: 126px; }
.b3 { width: 261px; }
.b4 { width: 308px; }
.b5 { width: 229px; }
.b6 { width: 307px; }
.b7 { width: 190px; }
.b8 { width: 308px; }
.b9 { width: 321px; }
.more { width: 36px; height: 32px; line-height: 28px; font-size: 26px; }
.other { height: 32px; padding-left: 20px; border-left: 2px solid #5b5d60; gap: 16px; }

/* page */
.hero { height: 258px; padding-top: 52px; background: #565656; }
.hero h1 { color: #fff; font-size: 94px; line-height: 116px; font-weight: 700; letter-spacing: -1.880px; text-align: center; }
.content { display: flex; flex: 1; min-height: 0; }
.side { width: 638px; padding: 64px; background: #c8c8c8; }
.search { display: flex; gap: 8px; }
.field {
  width: 350px;
  height: 60px;
  padding-left: 6px;
  border: 2px solid #767676;
  border-radius: 5px;
  background: #fff;
  font-size: 32px;
  line-height: 58px;
  letter-spacing: -.8px;
}
.btn {
  display: flex;
  align-items: center;
  justify-content: center;
  height: 60px;
  padding: 0;
  border: 4px solid;
  border-color: #767676 #212121 #212121 #767676;
  background: #efefef;
  color: #000;
  font: 32px "Inter", sans-serif;
  letter-spacing: -.8px;
}
.go { width: 62px; }
.go svg { width: 33px; height: 33px; margin-top: 2px; }
.clear { width: 220px; padding-right: 2px; }
.history { margin: 32px 26px 0; width: 458px; list-style: none; }
.history li {
  height: 134px;
  margin-top: -2px;
  border: 2px solid #000;
  border-radius: 30px;
  background: #fff;
  font-size: 58px;
  line-height: 135px;
  letter-spacing: -1.300px;
  text-align: center;
  text-indent: -2px;
  -webkit-text-stroke: .4px;
}
.history li:first-child { margin-top: 0; }

.main { width: 1910px; overflow: hidden; }
.current { display: flex; }
.today { width: 978px; padding: 1px 0 0 77px; color: #212529; font-weight: 500; -webkit-text-stroke: .7px; }
.today h2 { display: flex; align-items: center; height: 96px; font-size: 78px; font-weight: 500; letter-spacing: -1.150px; }
.today h2 svg { width: 85px; height: 46px; margin: 7px 0 0 25px; }
.date { margin-top: 11px; font-size: 39px; line-height: 48px; letter-spacing: -.740px; -webkit-text-stroke: .3px; }
.stat { font-size: 55px; line-height: 68px; letter-spacing: -2.200px; margin-top: 62px; text-indent: -1px; }
.stat span { letter-spacing: -.4px; }
.date + .stat { margin-top: 64px; }
.uv { display: flex; gap: 10px; margin-top: 62px; font-size: 47px; line-height: 56px; letter-spacing: -1.250px; }
.uv mark { width: 88px; padding-left: 1px; background: #f0a63b; color: inherit; letter-spacing: 0; font-size: 49px; }

/* map and its controls */
.map { position: relative; width: 932px; height: 776px; overflow: hidden; }
.map > svg { width: 932px; height: 776px; }
.halo text, text.halo { paint-order: stroke; stroke: rgba(255, 255, 255, .75); stroke-width: 14px; stroke-linejoin: round; }
.gb { fill: #4a80ec; }
.gr { fill: #d94f40; }
.gy { fill: #f2b93d; }
.gg { fill: #4fa158; }
.logo .gb { stroke: #4a80ec; }
.logo .gr { stroke: #d94f40; }
.logo .gy { stroke: #f2b93d; }
.logo .gg { stroke: #4fa158; }
.types {
  position: absolute;
  left: 20px;
  top: 20px;
  display: flex;
  height: 80px;
  border-radius: 4px;
  background: #fff;
  box-shadow: 0 2px 8px -2px rgba(0, 0, 0, .3);
  font: 36px/80px "Roboto", sans-serif;
  text-align: center;
}
.types b { width: 140px; padding-left: 2px; border-right: 1px solid #e6e6e6; font-weight: 600; }
.types span { width: 198px; color: #565656; }
.ctl {
  position: absolute;
  right: 20px;
  width: 80px;
  height: 80px;
  display: flex;
  flex-direction: column;
  align-items: center;
  justify-content: center;
  border-radius: 4px;
  background: #fff;
  box-shadow: 0 2px 8px -2px rgba(0, 0, 0, .3);
}
.ctl svg { width: 36px; height: 36px; }
.full { top: 20px; }
.peg { top: 422px; }
.peg svg { height: 62px; }
.zoom { top: 566px; height: 162px; justify-content: space-between; padding: 22px 0; }
.zoom hr { width: 60px; height: 2px; margin: 0; border: 0; background: #e6e6e6; }
.legal {
  position: absolute;
  right: 0;
  bottom: 0;
  display: flex;
  height: 28px;
  font: 20px/27px "Roboto", sans-serif;
  color: #3c3c3c;
  white-space: nowrap;
}
.legal span { background: rgba(245, 245, 245, .7); padding: 0 12px; border-left: 1px solid rgba(200, 220, 200, .8); }
.legal .l1 { padding-right: 11px; }

/* five day forecast */
.forecast { display: flex; flex-wrap: wrap; justify-content: space-around; width: 1878px; margin: 16px 0 0 15px; }
.card {
  width: 480px;
  height: 488px;
  border: 2px solid rgba(0, 0, 0, .125);
  border-radius: 8px;
  background: #0020f5;
  color: #fff;
  font-weight: 700;
}
.card h3, .card p { padding-left: 40px; border-bottom: 2px solid rgba(0, 0, 0, .125); }
.card h3 { height: 140px; padding-left: 39px; font-size: 60px; line-height: 140px; letter-spacing: -.15px; }
.card p { height: 98px; font-size: 32px; line-height: 96px; letter-spacing: -.3px; -webkit-text-stroke: .3px; }
.card p:last-child { border-bottom: 0; }
.card .sky { display: flex; align-items: center; height: 150px; padding-left: 49px; padding-bottom: 4px; gap: 5px; line-height: 140px; border-bottom: 2px solid rgba(0, 0, 0, .125); }
.sky svg { width: 86px; height: 46px; margin-top: -5px; }
.sky .single { width: 70px; height: 42px; margin: -9px 9px 0 6px; }
```
